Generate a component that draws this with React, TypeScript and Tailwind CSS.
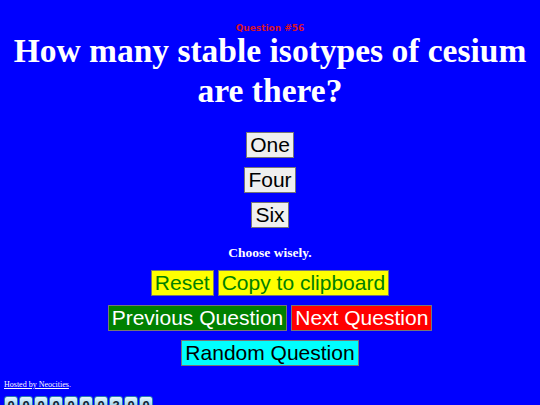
import React from 'react';

const answers = ['One', 'Four', 'Six'];

const btn = "border border-[#767676] px-[3px] py-px text-[21px] leading-[22px] font-['Liberation_Sans',Arial,sans-serif]";

export default function App() {
  return (
    <div className="min-h-[405px] w-full bg-[#0000ff] text-white font-['Liberation_Serif','Times_New_Roman',serif] flex flex-col">
      <div className="flex flex-col items-center pt-[22px]">
        <p className="text-[9px] leading-[12px] font-bold text-[#d8142a] font-['DejaVu_Sans',Verdana,sans-serif]">Question #56</p>
        <h1 className="-mt-[3px] text-[33.5px] leading-[40px] font-bold text-center px-2">How many stable isotypes of cesium are there?</h1>

        <div className="mt-[21px] flex flex-col items-center gap-[9px]">
          {answers.map((a) => (
            <button key={a} className={`${btn} bg-[#efefef] text-black`}>{a}</button>
          ))}
        </div>

        <p className="mt-[17px] text-[13.5px] leading-[16px] font-bold">Choose wisely.</p>

        {/* controls */}
        <div className="mt-[9px] flex flex-col items-center gap-[9px]">
          <div className="flex gap-[4px]">
            <button className={`${btn} bg-[#ffff00] text-[#008000]`}>Reset</button>
            <button className={`${btn} bg-[#ffff00] text-[#008000]`}>Copy to clipboard</button>
          </div>
          <div className="flex gap-[4px]">
            <button className={`${btn} bg-[#008000] text-white`}>Previous Question</button>
            <button className={`${btn} bg-[#ff0000] text-white`}>Next Question</button>
          </div>
          <div className="flex">
            <button className={`${btn} bg-[#00ffff] text-black`}>Random Question</button>
          </div>
        </div>
      </div>

      <div className="mt-[14px] px-[4px]">
        <p className="text-[8px] leading-[10px]"><a href="#" className="underline text-white">Hosted by Neocities</a>.</p>
        <div className="mt-[6px] flex gap-px">
          {'0000000300'.split('').map((d, i) => (
            <span key={i} className="w-[14px] h-[18px] rounded-[3px] bg-gradient-to-b from-[#e8f8ff] to-[#5ab4e0] border border-[#2a7fb0] text-[#123] text-[13px] leading-[18px] font-bold text-center font-['Liberation_Sans',Arial,sans-serif]">{d}</span>
          ))}
        </div>
      </div>
    </div>
  );
}
